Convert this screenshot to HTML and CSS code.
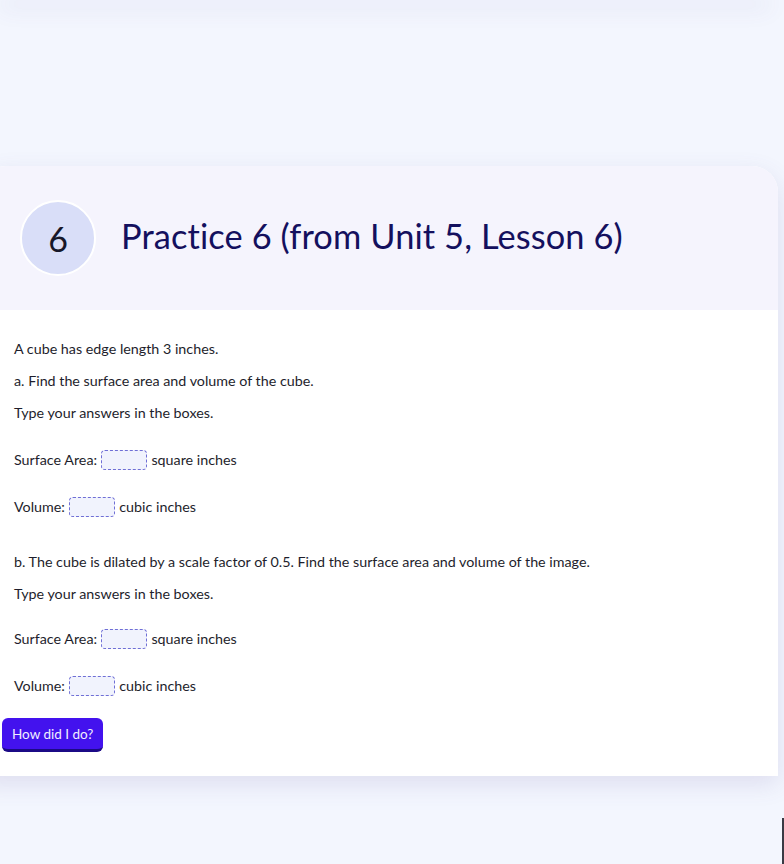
FILE: index.html
```html
<!DOCTYPE html>
<html>
<head>
<meta charset="utf-8">
<link rel="stylesheet" href="styles.css">
</head>
<body>
<div class="prev-card"></div>
<section class="card">
  <header class="card-head">
    <div class="num">6</div>
    <h2 class="title">Practice 6 (from Unit 5, Lesson 6)</h2>
  </header>
  <div class="card-body">
    <p class="txt">A cube has edge length 3 inches.</p>
    <p class="txt">a. Find the surface area and volume of the cube.</p>
    <p class="txt">Type your answers in the boxes.</p>
    <div class="ans first">Surface Area: <span class="box"></span> square inches</div>
    <div class="ans">Volume: <span class="box"></span> cubic inches</div>
    <p class="txt part-b">b. The cube is dilated by a scale factor of 0.5. Find the surface area and volume of the image.</p>
    <p class="txt">Type your answers in the boxes.</p>
    <div class="ans first2">Surface Area: <span class="box"></span> square inches</div>
    <div class="ans">Volume: <span class="box"></span> cubic inches</div>
    <button class="check">How did I do?</button>
  </div>
</section>
<div class="edge-line"></div>
</body>
</html>
```
FILE: styles.css
```css
html, body {
  margin: 0;
  padding: 0;
  background: #f3f6fe;
  overflow: hidden;
}
body {
  width: 784px;
  height: 864px;
  font-family: Lato, "Noto Sans", sans-serif;
  color: #1e1e2c;
}
.prev-card {
  height: 4px;
  margin-top: -4px;
  width: 770px;
  background: #f3f3fb;
  box-shadow: 0 6px 22px rgba(90, 80, 150, 0.24);
}
.card {
  margin-top: 166px;
  margin-left: -20px;
  width: 798px;
  background: #ffffff;
  border-radius: 26px 26px 0 0;
  box-shadow: 0 8px 24px rgba(90, 80, 150, 0.14);
  overflow: hidden;
}
.card-head {
  display: flex;
  align-items: center;
  gap: 25px;
  background: #f5f4fd;
  height: 144px;
  padding-left: 40px;
  box-sizing: border-box;
}
.num {
  width: 72px;
  height: 72px;
  border-radius: 50%;
  background: #d9def8;
  border: 2px solid #ffffff;
  display: flex;
  align-items: center;
  justify-content: center;
  font-size: 34px;
  color: #17172a;
  flex: none;
}
.title {
  margin: 0;
  padding-bottom: 5px;
  font-weight: 400;
  font-size: 34.4px;
  color: #14105e;
  letter-spacing: 0.1px;
}
.card-body {
  padding: 29px 34px 24px;
  font-size: 14.3px;
}
.txt {
  margin: 0 0 12px;
  line-height: 20px;
}
.ans {
  display: flex;
  align-items: center;
  height: 28px;
  line-height: 20px;
  margin-top: 19px;
  white-space: pre;
}
.ans.first {
  margin-top: 23px;
}
.ans.first2 {
  margin-top: 21px;
}
.box {
  display: inline-block;
  width: 44px;
  height: 18px;
  border: 1px dashed #6f6fd6;
  border-radius: 4px;
  background: #f1f3fd;
  margin: 0 1px 0 0;
}
.part-b {
  margin-top: 31px;
}
.check {
  display: block;
  margin: 18px 0 0 -12px;
  height: 34px;
  padding: 0 10px;
  background: #4312ee;
  border: none;
  border-bottom: 3px solid #1b0a86;
  border-radius: 6px;
  color: #f0eeff;
  font-family: Lato, "Noto Sans", sans-serif;
  font-size: 13.5px;
}
.edge-line {
  position: fixed;
  left: 782px;
  top: 818px;
  width: 2px;
  height: 46px;
  background: #3a3a44;
}
```
